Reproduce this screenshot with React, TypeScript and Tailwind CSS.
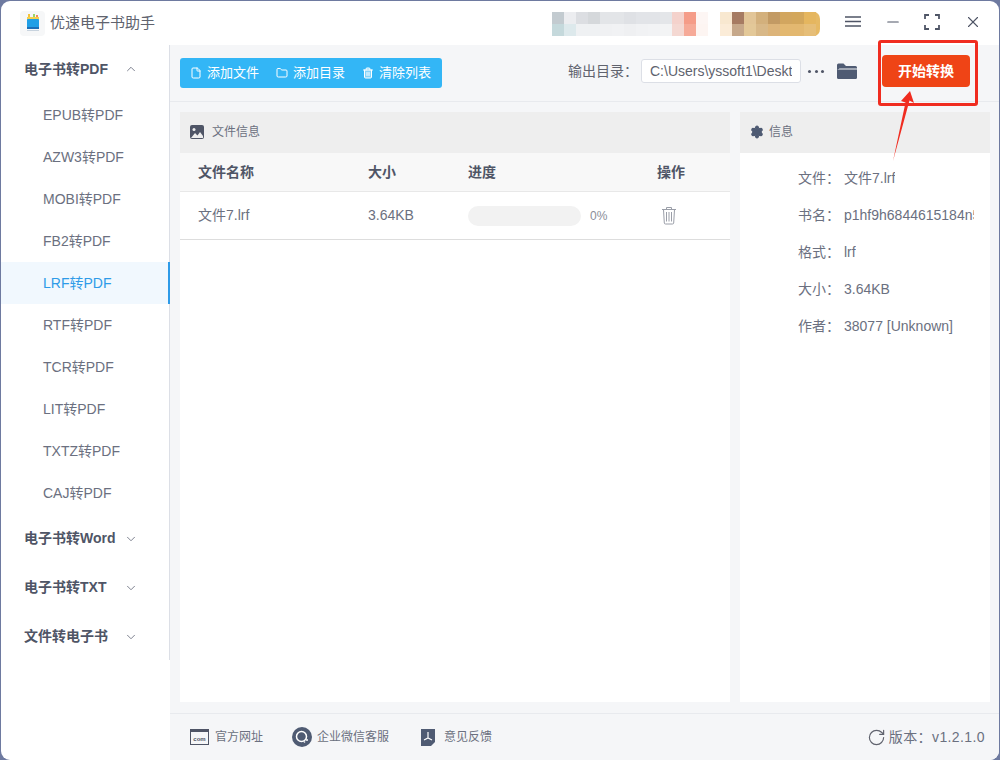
import React from "react";
import { ChevronUp, ChevronDown, RotateCw, Minus, X, Folder, File, Trash2, Settings } from "lucide-react";

const font = "font-['Liberation_Sans','Noto_Sans_CJK_SC',sans-serif]";

const subItems = ["EPUB转PDF", "AZW3转PDF", "MOBI转PDF", "FB2转PDF", "LRF转PDF", "RTF转PDF", "TCR转PDF", "LIT转PDF", "TXTZ转PDF", "CAJ转PDF"];
const groups = ["电子书转Word", "电子书转TXT", "文件转电子书"];

const info = [
	["文件：", "文件7.lrf"],
	["书名：", "p1hf9h6844615184n5"],
	["格式：", "lrf"],
	["大小：", "3.64KB"],
	["作者：", "38077 [Unknown]"],
];

// blurred account area, one colour per 12px cell
const mosaicTop = ["#c3cbd0", "#ecedf0", "#dcdee2", "#d5d8db", "#e3e5e8", "#e3e5e8", "#dfe1e5", "#e2e4e8", "#e2e4e8", "#e4e6e9", "#f4d2cc", "#f59c88", "#fdf6f4", "#ffffff", "#f8e8d0", "#a67b62", "#e2c597", "#d3b07c", "#c29a64", "#d2a65f", "#d3a75c", "#e5b65f"];
const mosaicBottom = ["#c5d9dc", "#dde9ec", "#eff1f3", "#eff1f3", "#f0f1f3", "#f1f2f4", "#eff0f2", "#f1f2f4", "#f2f3f5", "#f3f4f5", "#f4d8d2", "#f6aa98", "#fdf5f2", "#ffffff", "#fbecd8", "#c6a88a", "#e3c898", "#d8b888", "#dcb47a", "#e3b870", "#e3b870", "#e6be78"];

function Mosaic() {
	return (
		<svg width="268" height="24" className="shrink-0">
			<rect x="256" y="0" width="12" height="24" rx="7" fill="#e6b964" />
			{mosaicTop.map((c, i) => <rect key={i} x={i * 12} y="0" width="12" height="12" fill={c} />)}
			{mosaicBottom.map((c, i) => <rect key={i} x={i * 12} y="12" width="12" height="12" fill={c} />)}
		</svg>
	);
}

function Logo() {
	return (
		<div className="w-[25px] h-[25px] rounded bg-[#f6f7f8] flex items-center justify-center shrink-0">
			<svg width="20" height="20" viewBox="0 0 20 20">
				<rect x="5" y="1" width="2" height="4" fill="#f5c33b" />
				<rect x="10" y="1" width="2" height="4" fill="#9ed36a" />
				<rect x="13" y="2" width="2" height="3" fill="#f58a5b" />
				<rect x="4" y="4" width="12" height="3" fill="#f5d04b" />
				<rect x="4" y="6" width="12" height="10" rx="1" fill="#1f9fe6" />
				<rect x="4" y="14" width="12" height="2" fill="#1b6fb8" />
				<rect x="4" y="17" width="12" height="1" fill="#c8d3de" />
			</svg>
		</div>
	);
}

function Sidebar() {
	return (
		<aside className="w-[169px] shrink-0 flex flex-col">
			<div className="h-[615px] border-r border-[#dcdfe6] pt-[3px]">
				<div className="h-[42px] mb-[4px] flex items-center pl-[23px] pr-[31px] justify-between font-bold text-[14px] text-[#4f5566]">
					<span>电子书转PDF</span>
					<ChevronUp className="w-[14px] h-[14px] text-[#6b7080]" strokeWidth={1.5} />
				</div>
				{subItems.map((s) => (
					<div
						key={s}
						className={
							s === "LRF转PDF"
								? "h-[42px] flex items-center pl-[42px] text-[14px] text-[#2e9be8] bg-[#f1f8fe] border-r-2 border-[#2e9be8] w-[169px]"
								: "h-[42px] flex items-center pl-[42px] text-[14px] text-[#6b7080]"
						}
					>
						{s}
					</div>
				))}
				{groups.map((g) => (
					<div key={g} className="h-[49px] flex items-center pl-[23px] pr-[31px] justify-between font-bold text-[14px] text-[#4f5566]">
						<span>{g}</span>
						<ChevronDown className="w-[14px] h-[14px] text-[#6b7080]" strokeWidth={1.5} />
					</div>
				))}
			</div>
		</aside>
	);
}

function Toolbar() {
	return (
		<div className="h-[57px] shrink-0 border-b border-[#e8eaee] flex items-center pl-[10px] pr-[29px]">
			<div className="h-[30px] w-[262px] rounded-[3px] bg-[#33b6f6] text-white text-[13px] flex items-center pl-[10px] gap-[17px]">
				<span className="flex items-center gap-[5px]"><File className="w-3 h-3" />添加文件</span>
				<span className="flex items-center gap-[5px]"><Folder className="w-3 h-3" />添加目录</span>
				<span className="flex items-center gap-[5px]"><Trash2 className="w-3 h-3 fill-white/40" />清除列表</span>
			</div>
			<div className="ml-auto mb-[4px] flex items-center">
				<span className="text-[14px] text-[#60636e]">输出目录：</span>
				<div className="ml-[3px] w-[160px] h-[24px] bg-white border border-[#dcdfe6] rounded-[3px] px-2">
					<div className="text-[14px] leading-[22px] text-[#60636e] overflow-hidden whitespace-nowrap">
						C:\Users\yssoft1\Desktop
					</div>
				</div>
				<span className="ml-[7px] w-[16px] flex justify-between">
					<i className="w-[3px] h-[3px] rounded-full bg-[#4f5566]" />
					<i className="w-[3px] h-[3px] rounded-full bg-[#4f5566]" />
					<i className="w-[3px] h-[3px] rounded-full bg-[#4f5566]" />
				</span>
				<svg width="20" height="18" viewBox="0 0 20 18" className="ml-[13px]">
					<path d="M0 3a1.5 1.5 0 0 1 1.5-1.5h5L9 4h9.500A1.500 1.500 0 0 1 20 5.500v1H2.500L0 8z" fill="#4f5b73" />
					<path d="M0 7.500h20v8A1.500 1.500 0 0 1 18.500 17h-17A1.500 1.500 0 0 1 0 15.500z" fill="#4f5b73" />
				</svg>
				<button className="ml-[25px] w-[88px] h-[32px] rounded-[4px] bg-[#ef4416] text-white text-[14px] font-bold">开始转换</button>
			</div>
		</div>
	);
}

function FilePanel() {
	return (
		<section className="w-[550px] bg-white flex flex-col">
			<div className="h-[41px] pb-[2px] bg-[#eeeeee] flex items-center pl-[10px] gap-2 text-[12px] text-[#6b7080]">
				<svg width="14" height="14" viewBox="0 0 14 14">
					<rect width="14" height="14" rx="2" fill="#4f5566" />
					<circle cx="4" cy="4.500" r="1.500" fill="#eeeeee" />
					<path d="M1 13l4-5 2.500 2.500L10 7l3 4v2z" fill="#eeeeee" />
				</svg>
				文件信息
			</div>
			<div className="h-[39px] bg-[#f8f8f8] border-b border-[#e8e8e8] flex items-center pl-[18px] text-[14px] font-bold text-[#4f5566]">
				<span className="w-[170px]">文件名称</span>
				<span className="w-[100px]">大小</span>
				<span className="w-[189px]">进度</span>
				<span>操作</span>
			</div>
			<div className="h-[48px] border-b border-[#dddddd] flex items-center pl-[18px] text-[14px] text-[#6b7080]">
				<span className="w-[170px]">文件7.lrf</span>
				<span className="w-[100px]">3.64KB</span>
				<span className="w-[113px] h-[20px] rounded-full bg-[#f2f2f2]" />
				<span className="w-[76px] pl-[9px] text-[12px] text-[#8a8e99]">0%</span>
				<svg width="16" height="19" viewBox="0 0 16 19" fill="none" stroke="#9a9ea8" strokeWidth="1" className="ml-[4px]">
					<path d="M1 3.500h14M5.500 3.500V1.500h5v2M2.500 3.500l.8 13.500a1.200 1.200 0 0 0 1.200 1h7a1.200 1.200 0 0 0 1.200-1l.8-13.500" />
					<path d="M5.500 6v9.500M8 6v9.500M10.500 6v9.500" />
				</svg>
			</div>
		</section>
	);
}

function InfoPanel() {
	return (
		<section className="w-[250px] bg-white flex flex-col">
			<div className="h-[41px] pb-[2px] bg-[#eeeeee] flex items-center pl-[10px] gap-[5px] text-[12px] text-[#6b7080]">
				<Settings className="w-[14px] h-[14px] text-[#4f5b73] fill-[#4f5b73]" strokeWidth={2} />
				信息
			</div>
			<div className="pt-[7px] pl-[58px] pr-[16px] flex flex-col text-[14px] text-[#6b7080]">
				{info.map(([k, v]) => (
					<div key={k} className="h-[37px] flex items-center">
						<span className="w-[46px] shrink-0">{k}</span>
						<span className="overflow-hidden whitespace-nowrap">{v}</span>
					</div>
				))}
			</div>
		</section>
	);
}

function Footer() {
	return (
		<div className="h-[47px] shrink-0 border-t border-[#e8eaee] flex items-center pl-5 pr-[14px] text-[12px] text-[#6b7080]">
			<svg width="19" height="16" viewBox="0 0 19 16" fill="none" className="mr-[6px]">
				<rect x="0.500" y="0.500" width="18" height="15" fill="none" stroke="#4f5566" />
				<rect x="0.500" y="0.500" width="18" height="2.500" fill="#4f5566" />
				<text x="9.500" y="12" textAnchor="middle" fontSize="6" fontWeight="700" fill="#4f5566">com</text>
			</svg>
			<span>官方网址</span>
			<svg width="20" height="20" viewBox="0 0 20 20" className="ml-[29px] mr-[5px]">
				<circle cx="10" cy="10" r="10" fill="#4f5b73" />
				<circle cx="9.500" cy="9.500" r="5" fill="none" stroke="#ffffff" strokeWidth="1.500" />
				<circle cx="15" cy="13" r="1" fill="#ffffff" />
				<circle cx="12.500" cy="15" r="0.800" fill="#ffffff" />
			</svg>
			<span>企业微信客服</span>
			<svg width="14" height="18" viewBox="0 0 14 18" className="ml-[32px] mr-[9px]">
				<path d="M0 1h14v13l-4 4H0z" fill="#4f5b73" />
				<path d="M7 4v6M3 12l4-2 4 2" stroke="#ffffff" strokeWidth="1.200" fill="none" />
			</svg>
			<span>意见反馈</span>
			<RotateCw className="ml-auto w-[19px] h-[19px] text-[#60636e]" strokeWidth={1.5} />
			<span className="ml-[3px] text-[14px] tracking-[0.4px]">版本：v1.2.1.0</span>
		</div>
	);
}

export default function App() {
	return (
		<div className={`${font} w-[1000px] h-[760px] bg-[#6e7aa0] relative overflow-hidden`}>
			<div className="absolute inset-x-[1px] top-[1px] bottom-0 rounded-[9px] bg-white flex flex-col overflow-hidden">
				{/* title bar */}
				<div className="h-[44px] shrink-0 flex items-center pl-[19px] pr-[17px]">
					<Logo />
					<span className="ml-[5px] text-[15px] text-[#60636e]">优速电子书助手</span>
					<div className="ml-auto mr-[25px] mt-[2px]"><Mosaic /></div>
					<div className="flex items-center mb-[3px]">
						<svg width="16" height="11" viewBox="0 0 16 11" fill="none" stroke="#4f5566" strokeWidth="1.300">
							<path d="M0 1h16M0 5.500h16M0 10h16" />
						</svg>
						<Minus className="ml-[23px] w-[18px] h-[18px] text-[#4f5566]" strokeWidth={1.5} />
						<svg width="16" height="16" viewBox="0 0 16 16" fill="none" stroke="#4f5566" strokeWidth="1.800" className="ml-[22px]">
							<path d="M1 5V1h4M11 1h4v4M15 11v4h-4M5 15H1v-4" />
						</svg>
						<X className="ml-[24px] w-[18px] h-[18px] text-[#4f5566]" strokeWidth={1.5} />
					</div>
				</div>
				<div className="flex-1 flex min-h-0">
					<Sidebar />
					<main className="flex-1 bg-[#f5f6f8] flex flex-col min-w-0">
						<Toolbar />
						<div className="flex-1 flex gap-[10px] pl-[10px] pt-[10px] pb-[11px] min-h-0">
							<FilePanel />
							<InfoPanel />
						</div>
						<Footer />
					</main>
				</div>
			</div>
			{/* red annotation drawn over the screenshot */}
			<div className="absolute left-[878px] top-[40px] w-[100px] h-[66px] border-[3px] border-[#f02c20] rounded-[3px]" />
			<svg width="40" height="80" viewBox="0 0 40 80" className="absolute left-[885px] top-[85px]">
				<path d="M8 76L20.500 17.500 16 16 25 6 29 18 24.500 15.500z" fill="#f02c20" />
			</svg>
		</div>
	);
}
